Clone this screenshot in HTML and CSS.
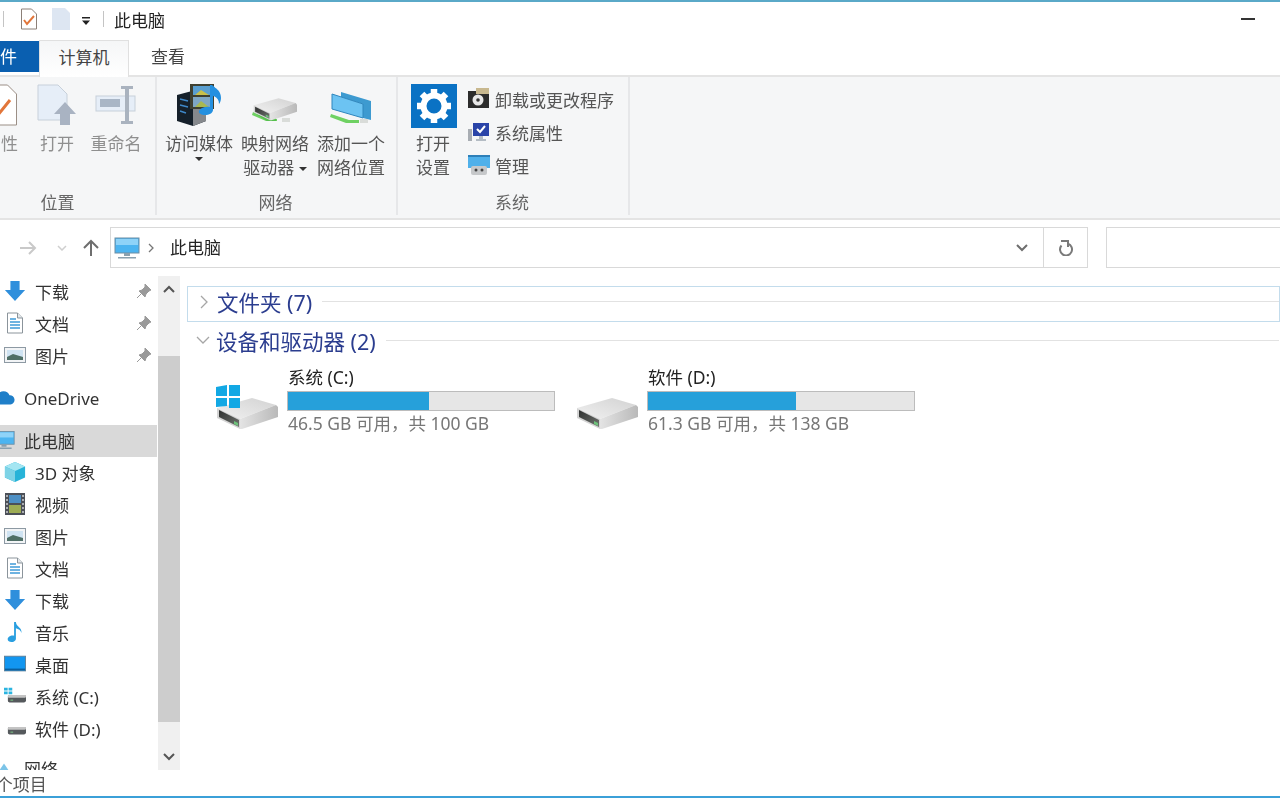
FILE: index.html
```html
<!DOCTYPE html>
<html lang="zh-CN">

<head>
    <meta charset="UTF-8">
    <title>此电脑</title>
    <link rel="stylesheet" href="styles.css">
</head>

<body>
    <!-- icones repetidos -->
    <svg class="defs" width="0" height="0">
        <defs>
            <linearGradient id="gTop" x1="0" y1="1" x2="1" y2="0"><stop offset="0" stop-color="#f1f1f1"/><stop offset="1" stop-color="#d2d2d2"/></linearGradient>
            <linearGradient id="gSide" x1="0" y1="0" x2="1" y2="0"><stop offset="0" stop-color="#e4e4e4"/><stop offset="1" stop-color="#b9b9b9"/></linearGradient>
            <linearGradient id="gSlot" x1="0" y1="0" x2="1" y2="1"><stop offset="0" stop-color="#2f3130"/><stop offset="1" stop-color="#6f736f"/></linearGradient>
        </defs>
        <symbol id="iDown" viewBox="0 0 22 24"><path d="M6 1h10v10h6L11 23 0 11h6z" fill="#2f8fdc"/></symbol>
        <symbol id="iDoc" viewBox="0 0 18 22"><path d="M1.500 1h10l5 5v15h-15z" fill="#fff" stroke="#8b949b"/><path d="M11.500 1v5h5" fill="#e3e8ec" stroke="#8b949b"/><path d="M4 7h6M4 10h10M4 13h10M4 16h10" stroke="#3f9bd8" stroke-width="1.500"/></symbol>
        <symbol id="iPic" viewBox="0 0 22 16"><rect x=".5" y=".5" width="21" height="15" fill="#f2f4f6" stroke="#8d99a3"/><rect x="3" y="3" width="16" height="10" fill="#cfe3f2"/><path d="M3 10l6-3 10 3v3H3z" fill="#4f6f66"/></symbol>
        <symbol id="iPin" viewBox="0 0 16 16"><path d="M9 1l6 6-2 1-3 3-1 3-6-6 3-1 3-3zM5 11l-4 4" fill="#9a9a9a" stroke="#9a9a9a"/></symbol>
        <symbol id="iPc" viewBox="0 0 26 22"><rect x="1" y="1" width="24" height="15" fill="#4cb4f0" stroke="#6d8da3"/><rect x="2" y="2" width="22" height="6" fill="#8fd3f8"/><path d="M10 16h6v3h-6zM4 20h18v1.500H4z" fill="#8aa0ae"/></symbol>
        <symbol id="iDrive" viewBox="0 0 62 32">
            <path d="M1 10L36 0l24 7L24 21z" fill="url(#gTop)"/>
            <path d="M24 21L60 7l2 2v10l-36 12h-2z" fill="url(#gSide)"/>
            <path d="M1 10l23 11v10L1 20z" fill="#d4d4d4"/>
            <path d="M3 12l20 10v7L3 19z" fill="url(#gSlot)"/>
            <path d="M18 23l4 2v3l-4-2z" fill="#6cc27a"/>
        </symbol>
        <symbol id="iSmallDrive" viewBox="0 0 20 10"><rect y="1" width="20" height="8" rx="2" fill="#55595c"/><rect y="1" width="20" height="3" rx="1.500" fill="#c4c4c4"/><rect x="3" y="6" width="3" height="1" fill="#7fd08a"/></symbol>
    </svg>

    <div class="window">
        <!-- barra de titulo -->
        <div class="titlebar">
            <span class="qaSep"></span>
            <svg class="qaIcon" viewBox="0 0 18 22"><path d="M1.500 1h10l5 5v15h-15z" fill="#fff" stroke="#8c8078"/><path d="M4 12l3 4 7-8" fill="none" stroke="#e2763a" stroke-width="2"/></svg>
            <svg class="qaIcon qaIcon2" viewBox="0 0 18 22"><path d="M0 0h13l5 5v17H0z" fill="#dde6f2"/></svg>
            <svg class="qaDrop" viewBox="0 0 10 8"><path d="M1 0h8v1.500H1zM1 3.500h8L5 8z" fill="#222"/></svg>
            <span class="qaSep qaSep2"></span>
            <span class="titleText">此电脑</span>
            <span class="minimize"></span>
        </div>

        <!-- abas -->
        <div class="tabs">
            <div class="tabFile">文件</div>
            <div class="tabActive">计算机</div>
            <div class="tabPlain">查看</div>
        </div>

        <!-- ribbon -->
        <div class="ribbon">
            <div class="group groupPlace">
                <div class="groupBody">
                    <div class="bigBtn w58 off">
                        <svg class="bigIcon" viewBox="0 0 34 42"><path d="M1.500 1h22l9 9v31h-31z" fill="#fff" stroke="#9b8f86"/><path d="M8 24l6 7 12-15" fill="none" stroke="#e2763a" stroke-width="3"/></svg>
                        <span>属性</span>
                    </div>
                    <div class="bigBtn w54 off">
                        <svg class="bigIcon" viewBox="0 0 40 42"><path d="M1 1h20l9 9v26H1z" fill="#e6eef8" stroke="#c7d0da"/><path d="M28 18l11 12h-6v11H23V30h-6z" fill="#a9b3c2"/></svg>
                        <span>打开</span>
                    </div>
                    <div class="bigBtn w64 off">
                        <svg class="bigIcon" viewBox="0 0 42 42"><rect x="1" y="12" width="39" height="15" fill="#e6eef8" stroke="#c7d0da"/><rect x="5" y="15" width="20" height="8" fill="#a9b6c6"/><path d="M26 2h12v3h-4v32h4v3H26v-3h4V5h-4z" fill="#aab3bf"/></svg>
                        <span>重命名</span>
                    </div>
                </div>
                <div class="groupLabel">位置</div>
            </div>

            <div class="group groupNet">
                <div class="groupBody">
                    <div class="bigBtn w76">
                        <svg class="bigIcon" viewBox="0 0 46 42">
                            <path d="M1 11l15-4 14 4v26l-13 5-16-5z" fill="#15202a"/>
                            <path d="M17 13l13-2v26l-13 5z" fill="#85888c"/>
                            <path d="M4 15l8 2M4 21l8 2M4 27l6 2" stroke="#3f88c9" stroke-width="1.500"/>
                            <rect x="14" y="0" width="24" height="25" fill="#3f4030"/>
                            <rect x="17" y="2" width="18" height="9" fill="#5a9fd0"/>
                            <path d="M19 11l6-5 8 5z" fill="#c9c04a"/>
                            <rect x="17" y="13" width="18" height="10" fill="#7fa7c4"/>
                            <path d="M19 23l6-6 8 6z" fill="#a9b84f"/>
                            <path d="M36 1c3 3 9 5 9 13 0 2-1 5-2 6 0-4-2-7-6-8v14c0 3-4 5-8 5s-7-2-6-4c1-3 7-5 11-4V1z" fill="#2490e0"/>
                        </svg>
                        <span>访问媒体</span>
                        <i class="caret caretBlock"></i>
                    </div>
                    <div class="bigBtn w76">
                        <svg class="bigIcon" viewBox="0 0 46 42">
                            <path d="M1 28l15 7h9v2H14L0 31z" fill="#6fd163"/>
                            <path d="M30 34h8v4h-8z" fill="#d9dcd9"/>
                            <path d="M4 30l12 4h8v3h-9z" fill="#57bf4f"/>
                            <use href="#iDrive" x="1" y="14" width="44" height="23"/>
                        </svg>
                        <span>映射网络<br>驱动器 <i class="caret"></i></span>
                    </div>
                    <div class="bigBtn w76">
                        <svg class="bigIcon" viewBox="0 0 46 42">
                            <path d="M13 8l30 9v19l-8-2V20L13 13z" fill="#3d9ad0"/>
                            <path d="M4 10l31 10v14L4 25z" fill="#6cc3f2" stroke="#2f86bd"/>
                            <path d="M3 30l18 6h10v3H18L2 33z" fill="#6fd163"/>
                            <path d="M32 35h8v4h-8z" fill="#d9dcd9"/>
                        </svg>
                        <span>添加一个<br>网络位置</span>
                    </div>
                </div>
                <div class="groupLabel">网络</div>
            </div>

            <div class="group groupSys">
                <div class="groupBody">
                    <div class="bigBtn w70">
                        <svg class="gearIcon" viewBox="0 0 46 44">
                            <rect width="46" height="44" fill="#0a72c4"/>
                            <circle cx="23" cy="22" r="10.500" fill="none" stroke="#fff" stroke-width="6"/>
                            <g stroke="#fff" stroke-width="6.500">
                                <path d="M23 5v6M23 33v6M6 22h6M34 22h6M11 10l4 4M31 30l4 4M35 10l-4 4M15 30l-4 4"/>
                            </g>
                        </svg>
                        <span>打开<br>设置</span>
                    </div>
                    <div class="smallList">
                        <div class="smallBtn">
                            <svg class="smallIcon" viewBox="0 0 22 22"><rect y="3" width="21" height="17" fill="#2c2c2c"/><path d="M8 0h13v6H8z" fill="#c8b88f"/><circle cx="10" cy="12" r="5.500" fill="#e8e8e8"/><circle cx="10" cy="12" r="1.800" fill="#333"/></svg>
                            <span>卸载或更改程序</span>
                        </div>
                        <div class="smallBtn">
                            <svg class="smallIcon" viewBox="0 0 22 22"><rect x="0" y="8" width="4" height="12" fill="#a8adb3"/><rect x="5" y="2" width="16" height="13" fill="#2a44a8"/><path d="M9 8l3 3 5-6" fill="none" stroke="#fff" stroke-width="2"/><path d="M11 15h4v3h3v2H8v-2h3z" fill="#b4bcc4"/></svg>
                            <span>系统属性</span>
                        </div>
                        <div class="smallBtn">
                            <svg class="smallIcon" viewBox="0 0 22 22"><rect x="0" y="1" width="22" height="13" fill="#4fb0ea"/><rect x="0" y="1" width="22" height="2" fill="#2d7fb8"/><rect x="3" y="12" width="16" height="9" rx="2" fill="#c6c8ca"/><circle cx="8" cy="16" r="1.500" fill="#444"/><circle cx="14" cy="16" r="1.500" fill="#444"/></svg>
                            <span>管理</span>
                        </div>
                    </div>
                </div>
                <div class="groupLabel">系统</div>
            </div>
        </div>

        <!-- endereco -->
        <div class="addressRow">
            <svg class="navArrow navForward" viewBox="0 0 18 16"><path d="M1 8h15M10 2l6 6-6 6" fill="none" stroke="#c9c9c9" stroke-width="2"/></svg>
            <svg class="navArrow navChevron" viewBox="0 0 10 6"><path d="M1 1l4 4 4-4" fill="none" stroke="#cfcfcf" stroke-width="1.500"/></svg>
            <svg class="navArrow navUp" viewBox="0 0 18 18"><path d="M9 17V2M2 9l7-7 7 7" fill="none" stroke="#6e6e6e" stroke-width="2"/></svg>
            <div class="addressBox">
                <svg class="addressPc"><use href="#iPc"/></svg>
                <svg class="crumb" viewBox="0 0 6 10"><path d="M1 1l4 4-4 4" fill="none" stroke="#777" stroke-width="1.300"/></svg>
                <span class="addressText">此电脑</span>
                <svg class="addressDrop" viewBox="0 0 12 8"><path d="M1 1l5 5 5-5" fill="none" stroke="#6e6e6e" stroke-width="2"/></svg>
                <div class="refreshBox">
                    <svg class="refreshIcon" viewBox="0 0 16 16"><path d="M10 3.800A6 6 0 1 1 3.500 5.500" fill="none" stroke="#7a7a7a" stroke-width="2"/><path d="M3 0h8v7H9V2H3z" fill="#7a7a7a"/></svg>
                </div>
            </div>
            <div class="searchBox"></div>
        </div>

        <div class="main">
            <!-- navegacao -->
            <div class="nav">
                <div class="navRow child"><svg class="nIcon"><use href="#iDown"/></svg><span>下载</span><svg class="pin"><use href="#iPin"/></svg></div>
                <div class="navRow child"><svg class="nIcon"><use href="#iDoc"/></svg><span>文档</span><svg class="pin"><use href="#iPin"/></svg></div>
                <div class="navRow child"><svg class="nIcon"><use href="#iPic"/></svg><span>图片</span><svg class="pin"><use href="#iPin"/></svg></div>

                <div class="navRow root gapOne">
                    <svg class="nIcon" viewBox="0 0 24 16"><path d="M6 15a5 5 0 0 1-1-10 7 7 0 0 1 13 0 5 5 0 0 1 1 10z" fill="#1f7fc9"/></svg>
                    <span>OneDrive</span>
                </div>

                <div class="navRow root gapTop selected"><svg class="nIcon"><use href="#iPc"/></svg><span>此电脑</span></div>
                <div class="navRow child">
                    <svg class="nIcon" viewBox="0 0 24 24"><path d="M12 1l11 5v12l-11 5-11-5V6z" fill="#27b3d8"/><path d="M1 6l11 5 11-5-11-5z" fill="#a5e6f2"/><path d="M1 6l11 5v12L1 18z" fill="#7ed3e6"/></svg>
                    <span>3D 对象</span>
                </div>
                <div class="navRow child">
                    <svg class="nIcon" viewBox="0 0 20 22"><rect width="20" height="22" fill="#4c5058"/><rect x="4" y="2" width="12" height="8" fill="#4d8fc4"/><rect x="4" y="12" width="12" height="8" fill="#9dac54"/><path d="M1 3h2M1 7h2M1 11h2M1 15h2M1 19h2M17 3h2M17 7h2M17 11h2M17 15h2M17 19h2" stroke="#c9cbce" stroke-width="1.500"/></svg>
                    <span>视频</span>
                </div>
                <div class="navRow child"><svg class="nIcon"><use href="#iPic"/></svg><span>图片</span></div>
                <div class="navRow child"><svg class="nIcon"><use href="#iDoc"/></svg><span>文档</span></div>
                <div class="navRow child"><svg class="nIcon"><use href="#iDown"/></svg><span>下载</span></div>
                <div class="navRow child">
                    <svg class="nIcon" viewBox="0 0 18 24"><path d="M8 1h2c0 5 7 6 6 12-1-3-3-4-6-5v11c0 3-3 4-5 4s-4-1-4-3c0-3 4-5 7-4z" fill="#2a9fe0"/></svg>
                    <span>音乐</span>
                </div>
                <div class="navRow child">
                    <svg class="nIcon" viewBox="0 0 24 18"><rect x=".5" y=".5" width="23" height="16" fill="#1296f0" stroke="#5f7f96"/><rect x="1" y="14" width="22" height="2" fill="#0b5f9e"/></svg>
                    <span>桌面</span>
                </div>
                <div class="navRow child">
                    <svg class="nIcon" viewBox="0 0 24 18"><path d="M0 0h4v3H0zM5 0h4v3H5zM0 4h4v3H0zM5 4h4v3H5z" fill="#2bb4e0"/><use href="#iSmallDrive" x="4" y="7" width="20" height="10"/></svg>
                    <span>系统 (C:)</span>
                </div>
                <div class="navRow child">
                    <svg class="nIcon" viewBox="0 0 24 18"><use href="#iSmallDrive" x="4" y="7" width="20" height="10"/></svg>
                    <span>软件 (D:)</span>
                </div>
                <div class="navRow root gapLast">
                    <svg class="nIcon" viewBox="0 0 24 16"><path d="M4 15l8-12 8 12z" fill="#7cc4e8"/></svg>
                    <span>网络</span>
                </div>
            </div>

            <!-- barra de rolagem -->
            <div class="scrollbar">
                <svg class="scrollArrow arrowUp" viewBox="0 0 12 8"><path d="M1 7l5-5 5 5" fill="none" stroke="#555" stroke-width="2"/></svg>
                <div class="thumb"></div>
                <svg class="scrollArrow arrowDown" viewBox="0 0 12 8"><path d="M1 1l5 5 5-5" fill="none" stroke="#555" stroke-width="2"/></svg>
            </div>

            <!-- conteudo -->
            <div class="content">
                <div class="sectionHead boxed">
                    <svg class="sectionChevron" viewBox="0 0 8 14"><path d="M1 1l6 6-6 6" fill="none" stroke="#a6a6a6" stroke-width="1.300"/></svg>
                    <span class="sectionTitle">文件夹 (7)</span>
                    <span class="sectionLine"></span>
                </div>
                <div class="sectionHead">
                    <svg class="sectionChevron chevronWide" viewBox="0 0 14 8"><path d="M1 1l6 6 6-6" fill="none" stroke="#a6a6a6" stroke-width="1.300"/></svg>
                    <span class="sectionTitle">设备和驱动器 (2)</span>
                    <span class="sectionLine"></span>
                </div>
                <div class="drives">
                    <div class="drive">
                        <div class="driveIcon">
                            <svg class="driveSvg"><use href="#iDrive"/></svg>
                            <svg class="winLogo" viewBox="0 0 24 23"><path d="M0 2l11-2v11H0zM13 0h11v11H13zM0 13h11v8l-11 1zM13 13h11v10H13z" fill="#12a8e4"/></svg>
                        </div>
                        <div class="driveInfo">
                            <div class="driveName">系统 (C:)</div>
                            <div class="bar"><div class="barFill" style="width: 53%"></div></div>
                            <div class="driveFree">46.5 GB 可用，共 100 GB</div>
                        </div>
                    </div>
                    <div class="drive">
                        <div class="driveIcon">
                            <svg class="driveSvg"><use href="#iDrive"/></svg>
                        </div>
                        <div class="driveInfo">
                            <div class="driveName">软件 (D:)</div>
                            <div class="bar"><div class="barFill" style="width: 55.7%"></div></div>
                            <div class="driveFree">61.3 GB 可用，共 138 GB</div>
                        </div>
                    </div>
                </div>
            </div>
        </div>

        <div class="statusbar"><span>18 个项目</span></div>
    </div>
</body>

</html>
```

FILE: styles.css
```css
html,
body {
    margin: 0;
    height: 100%;
    overflow: hidden;
    background-color: white;
}

body {
    font-family: "Noto Sans", "Noto Sans CJK SC", sans-serif;
    font-size: 17px;
    color: #333;
}

.defs {
    position: absolute;
}

/* A janela fica um pouco para fora da tela na esquerda */
.window {
    width: 1320px;
    height: 798px;
    margin-left: -40px;
    box-sizing: border-box;
    padding-top: 1px;
    display: flex;
    flex-direction: column;
    border-top: 2px solid #5aa9c8;
    border-bottom: 2px solid #3ba0d8;
    filter: blur(0.5px);
}

/* Barra de titulo */
.titlebar {
    height: 37px;
    padding-bottom: 5px;
    box-sizing: border-box;
    display: flex;
    align-items: center;
    flex: none;
}

.qaSep {
    width: 1px;
    height: 16px;
    background-color: #c4c4c4;
    margin-left: 43px;
}

.qaSep2 {
    margin-left: 12px;
}

.qaIcon {
    width: 18px;
    height: 22px;
    margin-left: 16px;
}

.qaIcon2 {
    margin-left: 14px;
}

.qaDrop {
    width: 10px;
    height: 8px;
    margin-left: 11px;
    margin-top: 3px;
}

.titleText {
    margin-left: 10px;
    font-size: 17px;
    color: #222;
}

.minimize {
    width: 14px;
    height: 2px;
    background-color: #333;
    margin-left: auto;
    margin-right: 25px;
}

/* Abas */
.tabs {
    height: 35px;
    display: flex;
    flex: none;
    font-size: 17px;
}

.tabFile {
    width: 79px;
    height: 31px;
    margin-top: 1px;
    box-sizing: border-box;
    padding-left: 23px;
    line-height: 31px;
    background-color: #0a5fb0;
    color: white;
}

.tabActive {
    width: 90px;
    height: 37px;
    box-sizing: border-box;
    border: 1px solid #e0e0e0;
    border-bottom: none;
    line-height: 33px;
    text-align: center;
    color: #444;
    position: relative;
    background: linear-gradient(#f5f6f7, #fff);
}

.tabPlain {
    margin-left: 22px;
    line-height: 33px;
    color: #444;
}

/* Ribbon */
.ribbon {
    height: 145px;
    flex: none;
    display: flex;
    background-color: #f5f6f7;
    border-top: 2px solid #e4e4e4;
    border-bottom: 2px solid #e4e4e4;
    box-sizing: border-box;
}

.group {
    height: 138px;
    display: flex;
    flex-direction: column;
    border-right: 2px solid #e6e7e9;
    box-sizing: border-box;
}

.groupPlace {
    width: 197px;
    padding-left: 12px;
}

.groupNet {
    width: 241px;
    padding-left: 4px;
}

.groupSys {
    width: 232px;
    padding-left: 0;
}

.groupBody {
    display: flex;
    height: 113px;
    padding-top: 7px;
    box-sizing: border-box;
}

.groupLabel {
    text-align: center;
    font-size: 17px;
    color: #666;
    line-height: 24px;
    margin-top: 3px;
}

.groupPlace .groupLabel {
    padding-right: 12px;
}

.groupNet .groupLabel {
    padding-right: 6px;
}

.groupSys .groupLabel {
    padding-right: 2px;
}

.bigBtn {
    display: flex;
    flex-direction: column;
    align-items: center;
    text-align: center;
    font-size: 17px;
    line-height: 24px;
    color: #555;
    white-space: nowrap;
}

.bigBtn.off {
    color: #8f8f8f;
}

.w54 {
    width: 54px;
}

.w58 {
    width: 58px;
}

.w64 {
    width: 64px;
}

.w70 {
    width: 70px;
}

.w76 {
    width: 76px;
}

.bigIcon {
    width: 46px;
    height: 42px;
    margin-bottom: 6px;
    flex: none;
}

.gearIcon {
    width: 46px;
    height: 44px;
    margin-left: 1px;
    margin-bottom: 4px;
    flex: none;
}

.caret {
    display: inline-block;
    width: 0;
    height: 0;
    border: 4px solid transparent;
    border-top-color: #333;
    border-bottom: none;
    vertical-align: middle;
}

.caretBlock {
    display: block;
    margin-top: 1px;
}

.smallList {
    display: flex;
    flex-direction: column;
    gap: 3px;
}

.smallBtn {
    height: 30px;
    display: flex;
    align-items: center;
    gap: 5px;
    font-size: 17px;
    color: #555;
    white-space: nowrap;
}

.smallIcon {
    width: 22px;
    height: 22px;
}

/* Linha do endereco */
.addressRow {
    height: 56px;
    flex: none;
    display: flex;
    align-items: center;
    box-sizing: border-box;
    padding-bottom: 1px;
    padding-left: 59px;
}

.navArrow {
    flex: none;
}

.navForward {
    width: 18px;
    height: 16px;
}

.navChevron {
    width: 10px;
    height: 6px;
    margin-left: 20px;
}

.navUp {
    width: 18px;
    height: 18px;
    margin-left: 15px;
}

.addressBox {
    width: 978px;
    height: 41px;
    margin-left: 10px;
    box-sizing: border-box;
    border: 1px solid #d9d9d9;
    display: flex;
    align-items: center;
    padding-left: 3px;
    flex: none;
}

.addressPc {
    width: 26px;
    height: 22px;
}

.crumb {
    width: 6px;
    height: 10px;
    margin-left: 8px;
}

.addressText {
    margin-left: 16px;
    margin-bottom: 3px;
    font-size: 17px;
    color: #222;
}

.addressDrop {
    width: 12px;
    height: 8px;
    margin-left: auto;
    margin-right: 15px;
}

.refreshBox {
    width: 44px;
    height: 39px;
    border-left: 1px solid #d9d9d9;
    display: flex;
    align-items: center;
    justify-content: center;
    box-sizing: border-box;
}

.refreshIcon {
    width: 16px;
    height: 16px;
}

.searchBox {
    width: 178px;
    height: 41px;
    margin-left: 18px;
    border: 1px solid #d9d9d9;
    flex: none;
    box-sizing: border-box;
}

/* Area principal */
.main {
    height: 494px;
    flex: none;
    display: flex;
    overflow: hidden;
}

.nav {
    width: 197px;
    flex: none;
    overflow: hidden;
}

.navRow {
    height: 32px;
    display: flex;
    align-items: center;
    box-sizing: border-box;
    padding-bottom: 2px;
    font-size: 17px;
    color: #333;
}

.navRow.child span {
    margin-left: 10px;
}

.navRow.child {
    padding-left: 45px;
}

.navRow.root {
    padding-left: 33px;
}

.navRow.root span {
    margin-left: 10px;
}

.nIcon {
    width: 22px;
    height: 22px;
    flex: none;
    margin-right: -1px;
}

.navRow.child .nIcon {
    margin-left: -1px;
}

.pin {
    width: 16px;
    height: 16px;
    margin-left: auto;
    margin-right: 5px;
}

.gapOne {
    margin-top: 11px;
}

.gapTop {
    margin-top: 10px;
}

.gapLast {
    margin-top: 8px;
}

.selected {
    background-color: #d9d9d9;
}

.scrollbar {
    width: 22px;
    margin-left: 1px;
    flex: none;
    background-color: #f0f0f0;
    display: flex;
    flex-direction: column;
    align-items: center;
    padding-top: 9px;
    box-sizing: border-box;
}

.scrollArrow {
    width: 12px;
    height: 8px;
    flex: none;
}

.thumb {
    width: 22px;
    height: 366px;
    margin-top: 63px;
    background-color: #cdcdcd;
    flex: none;
}

.arrowDown {
    margin-top: 31px;
}

.content {
    flex: 1;
    padding-left: 7px;
    padding-top: 10px;
    min-width: 0;
}

.sectionHead {
    height: 35px;
    display: flex;
    align-items: center;
    box-sizing: border-box;
    border: 1px solid transparent;
    margin-bottom: 3px;
    padding-left: 11px;
    padding-bottom: 5px;
}

.sectionHead.boxed {
    border-color: #c3dcec;
    height: 36px;
    padding-bottom: 5px;
}

.sectionChevron {
    width: 8px;
    height: 14px;
    margin-left: 1px;
    flex: none;
}

.chevronWide {
    width: 14px;
    height: 8px;
    margin-left: -3px;
    margin-right: -3px;
}

.sectionTitle {
    margin-left: 9px;
    font-size: 21.500px;
    color: #2b3d8f;
    white-space: nowrap;
}

.sectionLine {
    flex: 1;
    height: 1px;
    background-color: #e2e2e2;
    margin-left: 10px;
}

.drives {
    display: flex;
    padding-left: 29px;
    margin-top: 7px;
}

.drive {
    width: 360px;
    display: flex;
    flex: none;
}

.driveIcon {
    width: 61px;
    height: 66px;
    position: relative;
    flex: none;
}

.winLogo {
    position: absolute;
    left: 0;
    top: 18px;
    width: 24px;
    height: 23px;
}

.driveSvg {
    position: absolute;
    left: 0;
    top: 31px;
    width: 62px;
    height: 32px;
}

.driveInfo {
    margin-left: 10px;
    width: 268px;
}

.driveName {
    font-size: 17.500px;
    line-height: 20px;
    color: #222;
    margin-left: 1px;
}

.bar {
    height: 20px;
    margin-top: 4px;
    background-color: #e6e6e6;
    box-sizing: border-box;
    border: 1px solid #bcbcbc;
}

.barFill {
    height: 100%;
    background-color: #26a0da;
}

.driveFree {
    font-size: 17.500px;
    line-height: 24px;
    color: #777;
    margin-left: 1px;
}

.statusbar {
    height: 26px;
    flex: none;
    font-size: 17px;
    line-height: 30px;
    color: #555;
    padding-left: 12px;
}
```
